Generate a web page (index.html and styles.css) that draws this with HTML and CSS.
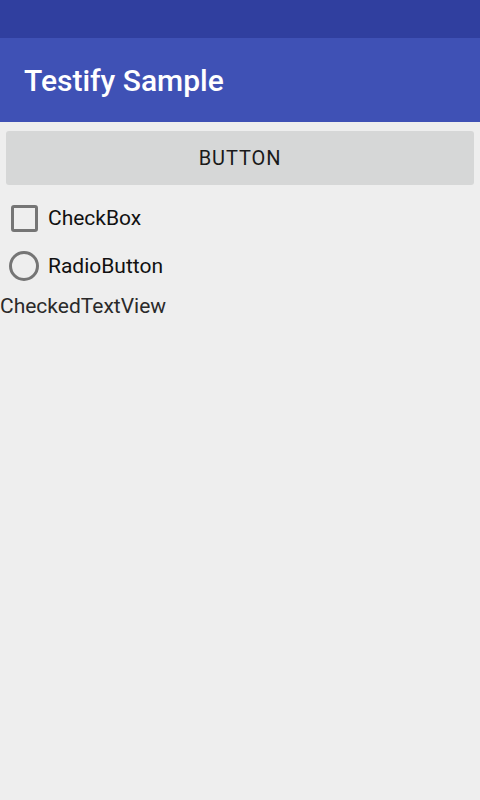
FILE: index.html
```html
<!DOCTYPE html>
<html>
<head>
<meta charset="utf-8">
<link rel="stylesheet" href="styles.css">
</head>
<body>
<div class="statusbar"></div>
<header class="toolbar"><h1 class="title">Testify Sample</h1></header>
<main class="content">
  <div class="button">BUTTON</div>
  <div class="row row-first">
    <span class="checkbox"></span>
    <span class="label">CheckBox</span>
  </div>
  <div class="row">
    <span class="radio"></span>
    <span class="label label-radio">RadioButton</span>
  </div>
  <div class="checked-text">CheckedTextView</div>
</main>
</body>
</html>
```
FILE: styles.css
```css
html, body {
  margin: 0;
  padding: 0;
  height: 100%;
}
body {
  background: #eeeeee;
  font-family: Roboto, "Liberation Sans", sans-serif;
  display: flex;
  flex-direction: column;
}
.statusbar {
  height: 38px;
  background: #303f9f;
  flex: none;
}
.toolbar {
  height: 84px;
  background: #3f51b5;
  display: flex;
  align-items: center;
  padding-left: 24px;
  flex: none;
}
.title {
  margin: 0;
  color: #ffffff;
  font-size: 30px;
  font-weight: 500;
}
.content {
  flex: 1;
  display: flex;
  flex-direction: column;
}
.button {
  margin: 9px 6px 0;
  height: 54px;
  background: #d6d7d7;
  border-radius: 3px;
  display: flex;
  align-items: center;
  justify-content: center;
  font-size: 20px;
  font-weight: 400;
  color: #1a1a1a;
  letter-spacing: 0.9px;
}
.row {
  height: 48px;
  display: flex;
  align-items: center;
}
.row-first {
  margin-top: 9px;
}
.checkbox {
  box-sizing: border-box;
  width: 27px;
  height: 27px;
  margin-left: 11px;
  border: 3px solid #757575;
  border-radius: 3px;
  flex: none;
}
.radio {
  box-sizing: border-box;
  width: 30px;
  height: 30px;
  margin-left: 9px;
  border: 3px solid #757575;
  border-radius: 50%;
  flex: none;
}
.label {
  margin-left: 10px;
  font-size: 21px;
  color: #111111;
}
.label-radio {
  margin-left: 9px;
}
.checked-text {
  padding-top: 4px;
  font-size: 21px;
  color: #2a2a2a;
}
```
